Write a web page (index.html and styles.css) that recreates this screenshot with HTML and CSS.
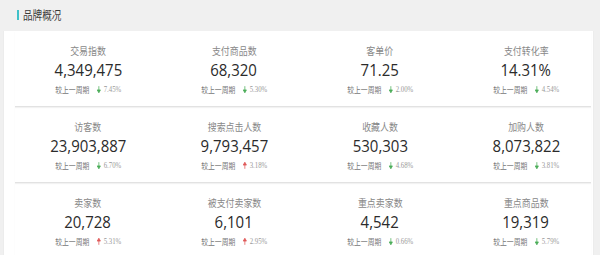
FILE: index.html
```html
<!DOCTYPE html>
<html lang="zh">
<head>
<meta charset="utf-8">
<link rel="stylesheet" href="styles.css">
</head>
<body>
<div class="page">
  <div class="title"><span class="bar"></span><span class="title-text">品牌概况</span></div>
  <div class="card">
    <div class="row">
      <div class="cell"><div class="label">交易指数</div><div class="num">4,349,475</div><div class="cmp"><span class="cmp-l">较上一周期</span><svg class="arr down" viewBox="0 0 6 8"><path d="M3 0v5M0.5 4.5L3 8L5.5 4.5Z"/></svg><span class="pct">7.45%</span></div></div>
      <div class="cell"><div class="label">支付商品数</div><div class="num">68,320</div><div class="cmp"><span class="cmp-l">较上一周期</span><svg class="arr down" viewBox="0 0 6 8"><path d="M3 0v5M0.5 4.5L3 8L5.5 4.5Z"/></svg><span class="pct">5.30%</span></div></div>
      <div class="cell"><div class="label">客单价</div><div class="num">71.25</div><div class="cmp"><span class="cmp-l">较上一周期</span><svg class="arr down" viewBox="0 0 6 8"><path d="M3 0v5M0.5 4.5L3 8L5.5 4.5Z"/></svg><span class="pct">2.00%</span></div></div>
      <div class="cell"><div class="label">支付转化率</div><div class="num">14.31%</div><div class="cmp"><span class="cmp-l">较上一周期</span><svg class="arr down" viewBox="0 0 6 8"><path d="M3 0v5M0.5 4.5L3 8L5.5 4.5Z"/></svg><span class="pct">4.54%</span></div></div>
    </div>
    <div class="row">
      <div class="cell"><div class="label">访客数</div><div class="num">23,903,887</div><div class="cmp"><span class="cmp-l">较上一周期</span><svg class="arr down" viewBox="0 0 6 8"><path d="M3 0v5M0.5 4.5L3 8L5.5 4.5Z"/></svg><span class="pct">6.70%</span></div></div>
      <div class="cell"><div class="label">搜索点击人数</div><div class="num">9,793,457</div><div class="cmp"><span class="cmp-l">较上一周期</span><svg class="arr up" viewBox="0 0 6 8"><path d="M3 8V3M0.5 3.5L3 0L5.5 3.5Z"/></svg><span class="pct">3.18%</span></div></div>
      <div class="cell"><div class="label">收藏人数</div><div class="num">530,303</div><div class="cmp"><span class="cmp-l">较上一周期</span><svg class="arr down" viewBox="0 0 6 8"><path d="M3 0v5M0.5 4.5L3 8L5.5 4.5Z"/></svg><span class="pct">4.68%</span></div></div>
      <div class="cell"><div class="label">加购人数</div><div class="num">8,073,822</div><div class="cmp"><span class="cmp-l">较上一周期</span><svg class="arr down" viewBox="0 0 6 8"><path d="M3 0v5M0.5 4.5L3 8L5.5 4.5Z"/></svg><span class="pct">3.81%</span></div></div>
    </div>
    <div class="row">
      <div class="cell"><div class="label">卖家数</div><div class="num">20,728</div><div class="cmp"><span class="cmp-l">较上一周期</span><svg class="arr up" viewBox="0 0 6 8"><path d="M3 8V3M0.5 3.5L3 0L5.5 3.5Z"/></svg><span class="pct">5.31%</span></div></div>
      <div class="cell"><div class="label">被支付卖家数</div><div class="num">6,101</div><div class="cmp"><span class="cmp-l">较上一周期</span><svg class="arr up" viewBox="0 0 6 8"><path d="M3 8V3M0.5 3.5L3 0L5.5 3.5Z"/></svg><span class="pct">2.95%</span></div></div>
      <div class="cell"><div class="label">重点卖家数</div><div class="num">4,542</div><div class="cmp"><span class="cmp-l">较上一周期</span><svg class="arr down" viewBox="0 0 6 8"><path d="M3 0v5M0.5 4.5L3 8L5.5 4.5Z"/></svg><span class="pct">0.66%</span></div></div>
      <div class="cell"><div class="label">重点商品数</div><div class="num">19,319</div><div class="cmp"><span class="cmp-l">较上一周期</span><svg class="arr down" viewBox="0 0 6 8"><path d="M3 0v5M0.5 4.5L3 8L5.5 4.5Z"/></svg><span class="pct">5.79%</span></div></div>
    </div>
  </div>
</div>
</body>
</html>
```

FILE: styles.css
```css
html, body {
  margin: 0;
  padding: 0;
  background: #f0f0f0;
  overflow: hidden;
}
.page {
  width: 600px;
  height: 255px;
  font-family: "Noto Sans CJK SC", "Noto Sans", sans-serif;
}
.title {
  height: 31px;
  display: flex;
  align-items: center;
  padding-left: 17px;
  box-sizing: border-box;
  padding-bottom: 1px;
}
.bar {
  width: 2px;
  height: 10px;
  background: #3fc1c9;
  margin-right: 4px;
}
.title-text {
  display: inline-block;
  font-size: 12px;
  color: #3a3a3a;
  line-height: 14px;
  transform: scaleX(0.8);
  transform-origin: left center;
}
.card {
  margin: 0 6px 0 3px;
  background: #fff;
  border-left: 1px solid #ececec;
  border-right: 1px solid #ececec;
  height: 230px;
  box-sizing: border-box;
}
.row {
  margin: 0 2px 0 11px;
  height: 76px;
  box-sizing: border-box;
  border-bottom: 1px solid #e2e2e2;
  box-shadow: 0 1px 1px rgba(0,0,0,0.05);
  display: grid;
  grid-template-columns: repeat(4, 146px);
}
.cell {
  display: flex;
  flex-direction: column;
  align-items: center;
  padding-top: 13px;
}
.label {
  font-size: 10.5px;
  line-height: 13px;
  color: #888;
  transform: scaleX(0.85);
  white-space: nowrap;
}
.num {
  margin-top: 4px;
  font-family: "Open Sans", "Noto Sans", sans-serif;
  font-size: 17px;
  line-height: 18px;
  color: #2b2b2b;
  transform: scaleX(0.88);
  white-space: nowrap;
}
.cmp {
  margin-top: 3px;
  display: flex;
  align-items: center;
  height: 14px;
  font-size: 8.5px;
  color: #777;
  transform: scaleX(0.8);
  white-space: nowrap;
}
.cmp-l {
  margin-right: 9px;
}
.arr {
  width: 5px;
  height: 7px;
  margin-right: 4px;
}
.arr path {
  stroke-width: 1;
}
.arr.down path {
  fill: #4cae5a;
  stroke: #4cae5a;
}
.arr.up path {
  fill: #e05a5a;
  stroke: #e05a5a;
}
.pct {
  font-family: "Liberation Serif", serif;
  font-size: 8.5px;
  color: #999;
}
```
